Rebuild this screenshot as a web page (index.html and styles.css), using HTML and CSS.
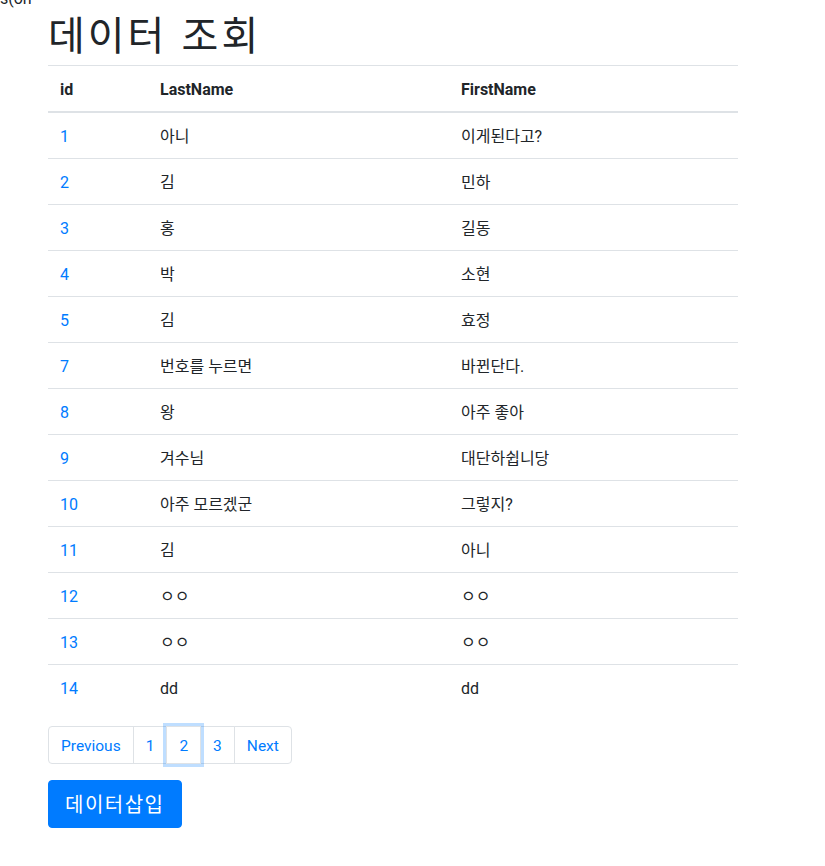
FILE: index.html
```html
<!DOCTYPE html>
<html lang="ko">
<head>
<meta charset="utf-8">
<title>데이터 조회</title>
<link rel="stylesheet" href="styles.css">
</head>
<body>
<div class="topline">s(on</div>
<div class="container">
  <h1 class="title">데이터 조회</h1>
  <table class="table">
    <colgroup>
      <col class="c-id">
      <col class="c-last">
      <col>
    </colgroup>
    <thead>
      <tr><th>id</th><th>LastName</th><th>FirstName</th></tr>
    </thead>
    <tbody>
      <tr><td><a href="#">1</a></td><td>아니</td><td>이게된다고?</td></tr>
      <tr><td><a href="#">2</a></td><td>김</td><td>민하</td></tr>
      <tr><td><a href="#">3</a></td><td>홍</td><td>길동</td></tr>
      <tr><td><a href="#">4</a></td><td>박</td><td>소현</td></tr>
      <tr><td><a href="#">5</a></td><td>김</td><td>효정</td></tr>
      <tr><td><a href="#">7</a></td><td>번호를 누르면</td><td>바뀐단다.</td></tr>
      <tr><td><a href="#">8</a></td><td>왕</td><td>아주 좋아</td></tr>
      <tr><td><a href="#">9</a></td><td>겨수님</td><td>대단하쉽니당</td></tr>
      <tr><td><a href="#">10</a></td><td>아주 모르겠군</td><td>그렇지?</td></tr>
      <tr><td><a href="#">11</a></td><td>김</td><td>아니</td></tr>
      <tr><td><a href="#">12</a></td><td>ㅇㅇ</td><td>ㅇㅇ</td></tr>
      <tr><td><a href="#">13</a></td><td>ㅇㅇ</td><td>ㅇㅇ</td></tr>
      <tr><td><a href="#">14</a></td><td>dd</td><td>dd</td></tr>
    </tbody>
  </table>
  <ul class="pagination">
    <li class="page-item"><a class="page-link first" href="#">Previous</a></li>
    <li class="page-item"><a class="page-link" href="#">1</a></li>
    <li class="page-item"><a class="page-link focused" href="#">2</a></li>
    <li class="page-item"><a class="page-link" href="#">3</a></li>
    <li class="page-item"><a class="page-link last" href="#">Next</a></li>
  </ul>
  <button class="btn-primary" type="button">데이터삽입</button>
</div>
</body>
</html>
```
FILE: styles.css
```css
* { box-sizing: border-box; }
html, body {
  margin: 0;
  background: #fff;
}
body {
  font-family: "Segoe UI", Roboto, "Noto Sans CJK KR", sans-serif;
  font-size: 16px;
  line-height: 1.5;
  color: #212529;
}
.topline {
  margin-top: -12px;
  height: 21px;
  line-height: 21px;
  white-space: nowrap;
  font-family: Roboto, "Noto Sans CJK KR", sans-serif;
}
.container {
  width: 690px;
  margin-left: 48px;
}
.title {
  margin: 0 0 8px 0;
  font-size: 40px;
  font-weight: 400;
  line-height: 48px;
  letter-spacing: 3px;
  font-family: "Noto Sans CJK KR", sans-serif;
}
.table {
  width: 100%;
  border-collapse: collapse;
  margin-bottom: 16px;
  color: #212529;
}
.c-id { width: 100px; }
.c-last { width: 301px; }
.table th, .table td {
  text-align: left;
  vertical-align: top;
  padding: 12px 12px 9px;
  line-height: 24px;
  font-size: 16px;
  border-top: 1px solid #dee2e6;
}
.table th {
  font-weight: 700;
}
.table thead th {
  border-bottom: 2px solid #dee2e6;
}
.table td {
  font-weight: 400;
}
a {
  color: #007bff;
  text-decoration: none;
}
.pagination {
  display: flex;
  list-style: none;
  padding: 0;
  margin: 0 0 16px 0;
}
.page-link {
  display: block;
  position: relative;
  padding: 9px 12px 7px;
  margin-left: -1px;
  line-height: 20px;
  font-size: 15.5px;
  color: #007bff;
  background: #fff;
  border: 1px solid #dee2e6;
}
.page-link.first {
  margin-left: 0;
  border-radius: 4px 0 0 4px;
}
.page-link.last {
  border-radius: 0 4px 4px 0;
}
.page-link.focused {
  z-index: 3;
  box-shadow: 0 0 0 3px rgba(0, 123, 255, 0.25);
}
.btn-primary {
  display: inline-block;
  font-family: "Noto Sans CJK KR", sans-serif;
  font-size: 20px;
  line-height: 30px;
  padding: 8px 16px;
  letter-spacing: 1.5px;
  color: #fff;
  background: #007bff;
  border: 1px solid #007bff;
  border-radius: 4px;
}
```
